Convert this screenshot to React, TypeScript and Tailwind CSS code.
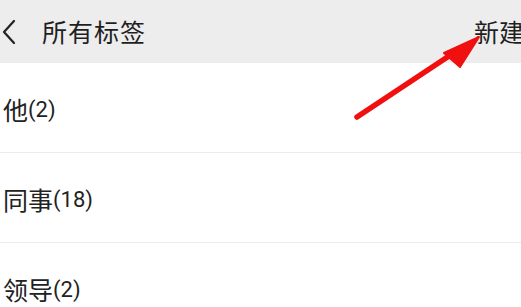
const tags = [
  { name: '他', count: 2 },
  { name: '同事', count: 18 },
  { name: '领导', count: 2 },
];

const App = () => {
  return (
    <div
      className="relative w-[521px] h-[307px] overflow-hidden bg-white"
      style={{ fontFamily: '"Noto Sans CJK SC", "Noto Sans", sans-serif' }}
    >
      <header className="flex items-center h-[63px] bg-[#ededed]">
        <svg width="16" height="26" viewBox="0 0 16 26" className="ml-[1px] shrink-0">
          <path d="M13 2 L3 13 L13 24" fill="none" stroke="#222" strokeWidth="2.2" strokeLinecap="round" strokeLinejoin="round" />
        </svg>
        <span className="ml-[25px] text-[25px] leading-none text-[#1f1f1f] tracking-[1px]">所有标签</span>
        <span className="ml-auto mr-[-3px] text-[25px] leading-none text-[#1f1f1f] whitespace-nowrap">新建</span>
      </header>

      <ul>
        {tags.map((t) => (
          <li key={t.name} className="flex items-center h-[90px] pl-[3px] pt-[4px] border-b border-[#ececec] text-[25px] leading-none text-[#222]">
            {t.name}
            <span className="text-[22px]" style={{ fontFamily: 'Roboto, sans-serif' }}>({t.count})</span>
          </li>
        ))}
      </ul>

      <svg className="absolute left-0 top-0 pointer-events-none" width="521" height="307" viewBox="0 0 521 307">
        <line x1="357" y1="117" x2="455" y2="52" stroke="#f01010" strokeWidth="5.5" strokeLinecap="round" />
        <polygon points="479,37 444,53 460,67" fill="#f01010" stroke="#f01010" strokeWidth="2" strokeLinejoin="round" />
      </svg>
    </div>
  );
};

export default App;
